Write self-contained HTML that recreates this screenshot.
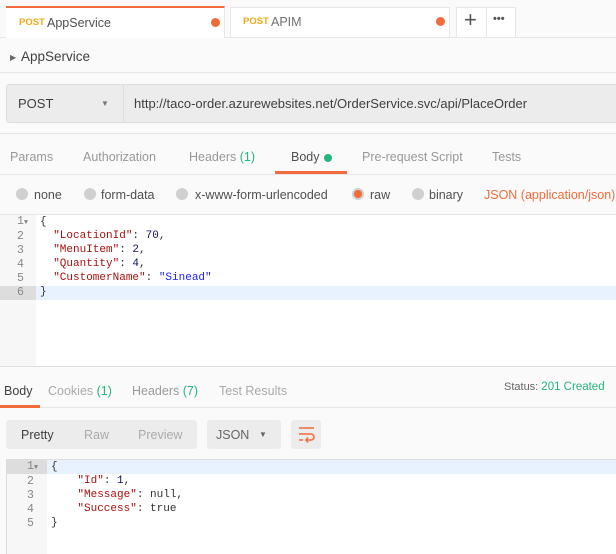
<!DOCTYPE html><html><head><style>
*{margin:0;padding:0;box-sizing:border-box}
body{width:616px;height:554px;overflow:hidden;background:#fafafa;font-family:"Liberation Sans",sans-serif;font-size:12.5px;color:#505050;position:relative}
.a{position:absolute;white-space:nowrap}
.mono{font-family:"Liberation Mono",monospace;font-size:11px}
.dot{display:inline-block;width:9px;height:9px;border-radius:50%;background:#f26b3a}
.rad{position:absolute;width:12px;height:12px;border-radius:50%;background:#d0d0d0;top:188px}
.k{color:#a11}.n{color:#116}.s{color:#22f}
.t{top:150px}
.r{top:188px}
</style></head><body>
<!-- tabs -->
<div class="a" style="left:0;top:37px;width:616px;height:1px;background:#e6e6e6"></div>
<div class="a" style="left:6px;top:6px;width:219px;height:32px;background:#fff;border-top:2px solid #f26b3a;border-right:1px solid #e6e6e6"></div>
<div class="a" style="left:19px;top:17px;font-size:9.5px;font-weight:bold;color:#f4a81b">POST</div>
<div class="a" style="left:47px;top:16px;color:#505050">AppService</div>
<div class="a dot" style="left:211px;top:18px"></div>
<div class="a" style="left:230px;top:7px;width:220px;height:30px;background:#fff;border:1px solid #e6e6e6;border-bottom:none"></div>
<div class="a" style="left:243px;top:16px;font-size:9.5px;font-weight:bold;color:#f4a81b">POST</div>
<div class="a" style="left:271px;top:15px;color:#707070">APIM</div>
<div class="a dot" style="left:436px;top:17px"></div>
<div class="a" style="left:456px;top:7px;width:60px;height:30px;background:#fff;border:1px solid #e6e6e6;border-bottom:none"></div>
<div class="a" style="left:486px;top:7px;width:1px;height:30px;background:#e6e6e6"></div>
<div class="a" style="left:464px;top:7px;font-size:22px;color:#555">+</div>
<div class="a" style="left:493px;top:13px;font-size:11px;color:#555;font-weight:bold">•••</div>
<!-- name -->
<div class="a" style="left:10px;top:53px;font-size:8px;color:#666">▶</div>
<div class="a" style="left:21px;top:49px;font-size:13.5px;color:#404040">AppService</div>
<div class="a" style="left:0;top:72px;width:616px;height:1px;background:#e6e6e6"></div>
<!-- url bar -->
<div class="a" style="left:6px;top:84px;width:620px;height:39px;background:#ececec;border:1px solid #ddd;border-radius:3px"></div>
<div class="a" style="left:123px;top:85px;width:1px;height:37px;background:#ddd"></div>
<div class="a" style="left:18px;top:96px;color:#404040;font-size:13px">POST</div>
<div class="a" style="left:101px;top:99px;font-size:8px;color:#777">▼</div>
<div class="a" style="left:134px;top:96px;color:#404040;font-size:13px">http://taco-order.azurewebsites.net/OrderService.svc/api/PlaceOrder</div>
<div class="a" style="left:0;top:133px;width:616px;height:1px;background:#e6e6e6"></div>
<!-- req tabs -->
<div class="a t" style="left:10px;color:#999">Params</div>
<div class="a t" style="left:83px;color:#999">Authorization</div>
<div class="a t" style="left:189px;color:#999">Headers <span style="color:#26b47f">(1)</span></div>
<div class="a t" style="left:291px;color:#505050">Body</div>
<div class="a" style="left:324px;top:154px;width:8px;height:8px;border-radius:50%;background:#26b47f"></div>
<div class="a t" style="left:362px;color:#999">Pre-request Script</div>
<div class="a t" style="left:492px;color:#999">Tests</div>
<div class="a" style="left:0;top:174px;width:616px;height:1px;background:#e6e6e6"></div>
<div class="a" style="left:275px;top:171px;width:72px;height:3px;background:#f26b3a"></div>
<!-- radios -->
<div class="rad" style="left:16px"></div><div class="a r" style="left:34px">none</div>
<div class="rad" style="left:84px"></div><div class="a r" style="left:101px">form-data</div>
<div class="rad" style="left:176px"></div><div class="a r" style="left:195px">x-www-form-urlencoded</div>
<div class="rad" style="left:352px;background:#f26b3a;border:2px solid #d0d0d0"></div><div class="a r" style="left:370px">raw</div>
<div class="rad" style="left:412px"></div><div class="a r" style="left:429px">binary</div>
<div class="a r" style="left:484px;color:#f26b3a">JSON (application/json)</div>
<!-- editor -->
<div class="a" style="left:0;top:214px;width:616px;height:153px;background:#fff;border-top:1px solid #e6e6e6;border-bottom:1px solid #ddd"></div>
<div class="a" style="left:0;top:215px;width:36px;height:151px;background:#f7f7f7"></div>
<div class="a" style="left:0;top:286px;width:616px;height:14px;background:#e8f2ff"></div>
<div class="a" style="left:0;top:286px;width:36px;height:14px;background:#ddd"></div>
<div class="a mono" style="left:17px;top:215px;line-height:14px;color:#888;font-size:11.5px">1<span style="font-size:7px">▼</span><br>2<br>3<br>4<br>5<br>6</div>
<div class="a mono" style="left:40px;top:215px;line-height:14px;color:#333">{<br>&nbsp;&nbsp;<span class="k">"LocationId"</span>: <span class="n">70</span>,<br>&nbsp;&nbsp;<span class="k">"MenuItem"</span>: <span class="n">2</span>,<br>&nbsp;&nbsp;<span class="k">"Quantity"</span>: <span class="n">4</span>,<br>&nbsp;&nbsp;<span class="k">"CustomerName"</span>: <span class="s">"Sinead"</span><br>}</div>
<!-- response tabs -->
<div class="a" style="left:4px;top:384px;color:#404040">Body</div>
<div class="a" style="left:48px;top:384px;color:#aaa">Cookies <span style="color:#26b47f">(1)</span></div>
<div class="a" style="left:132px;top:384px;color:#999">Headers <span style="color:#26b47f">(7)</span></div>
<div class="a" style="left:219px;top:384px;color:#aaa">Test Results</div>
<div class="a" style="left:504px;top:381px;font-size:11px;color:#666">Status: <span style="color:#26b47f;font-size:11.5px">201 Created</span></div>
<div class="a" style="left:0;top:407px;width:616px;height:1px;background:#e6e6e6"></div>
<div class="a" style="left:0;top:405px;width:40px;height:3px;background:#f26b3a"></div>
<!-- toolbar -->
<div class="a" style="left:6px;top:420px;width:191px;height:29px;background:#ececec;border-radius:3px"></div>
<div class="a" style="left:21px;top:428px;color:#404040">Pretty</div>
<div class="a" style="left:84px;top:428px;color:#aaa">Raw</div>
<div class="a" style="left:138px;top:428px;color:#aaa">Preview</div>
<div class="a" style="left:207px;top:420px;width:74px;height:29px;background:#ececec;border-radius:3px"></div>
<div class="a" style="left:216px;top:428px;color:#666">JSON</div>
<div class="a" style="left:259px;top:430px;font-size:8px;color:#666">▼</div>
<div class="a" style="left:291px;top:420px;width:30px;height:29px;background:#ececec;border-radius:3px"></div>
<svg class="a" style="left:298px;top:426px" width="17" height="17" viewBox="0 0 17 17"><path d="M1 2H16M1 8H13a3 3 0 0 1 0 6H8M10 11.5L8 14L10 16.5M1 14H5" stroke="#f26b3a" stroke-width="1.6" fill="none"/></svg>
<!-- response editor -->
<div class="a" style="left:6px;top:459px;width:610px;height:95px;background:#fff;border-top:1px solid #ddd;border-left:1px solid #ddd"></div>
<div class="a" style="left:7px;top:460px;width:40px;height:94px;background:#f7f7f7"></div>
<div class="a" style="left:7px;top:460px;width:609px;height:14px;background:#e8f2ff"></div>
<div class="a" style="left:7px;top:460px;width:40px;height:14px;background:#ddd"></div>
<div class="a mono" style="left:27px;top:460px;line-height:14px;color:#888;font-size:11.5px">1<span style="font-size:7px">▼</span><br>2<br>3<br>4<br>5</div>
<div class="a mono" style="left:51px;top:460px;line-height:14px;color:#333">{<br>&nbsp;&nbsp;&nbsp;&nbsp;<span class="k">"Id"</span>: <span class="n">1</span>,<br>&nbsp;&nbsp;&nbsp;&nbsp;<span class="k">"Message"</span>: null,<br>&nbsp;&nbsp;&nbsp;&nbsp;<span class="k">"Success"</span>: true<br>}</div>
</body></html>
